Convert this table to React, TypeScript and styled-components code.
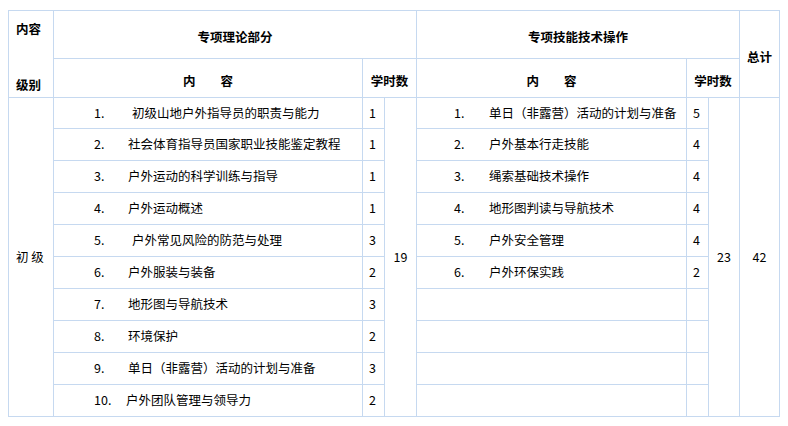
import styled, { createGlobalStyle } from "styled-components";

const GlobalStyle = createGlobalStyle`
  html, body {
    margin: 0;
    padding: 0;
    background: #ffffff;
  }

  body {
    font-family: "Noto Sans CJK SC", "Noto Sans", sans-serif;
    color: #000000;
  }
`;

const line = "#c6d9f0";

interface Item {
  no: string;
  text: string;
  hours: string;
  shift?: number;
}

const theory: Item[] = [
  { no: "1.", text: "初级山地户外指导员的职责与能力", hours: "1", shift: 4 },
  { no: "2.", text: "社会体育指导员国家职业技能鉴定教程", hours: "1" },
  { no: "3.", text: "户外运动的科学训练与指导", hours: "1" },
  { no: "4.", text: "户外运动概述", hours: "1" },
  { no: "5.", text: "户外常见风险的防范与处理", hours: "3", shift: 4 },
  { no: "6.", text: "户外服装与装备", hours: "2" },
  { no: "7.", text: "地形图与导航技术", hours: "3" },
  { no: "8.", text: "环境保护", hours: "2" },
  { no: "9.", text: "单日（非露营）活动的计划与准备", hours: "3" },
  { no: "10.", text: "户外团队管理与领导力", hours: "2", shift: -2 },
];

const skills: Item[] = [
  { no: "1.", text: "单日（非露营）活动的计划与准备", hours: "5" },
  { no: "2.", text: "户外基本行走技能", hours: "4" },
  { no: "3.", text: "绳索基础技术操作", hours: "4" },
  { no: "4.", text: "地形图判读与导航技术", hours: "4" },
  { no: "5.", text: "户外安全管理", hours: "4" },
  { no: "6.", text: "户外环保实践", hours: "2" },
];

const Page = styled.div`
  padding: 10px 0 0 8px;
`;

const Sheet = styled.table`
  border-collapse: collapse;
  table-layout: fixed;
  width: 771px;
  font-size: 12.5px;
  line-height: 18.7px;

  th,
  td {
    border: 1px solid ${line};
    padding: 0;
  }
`;

const Row = styled.tr<{ $height: number }>`
  height: ${(p) => p.$height}px;
`;

const HeadCell = styled.th`
  font-weight: bold;
  text-align: center;
  vertical-align: middle;
  padding-top: 6px !important;
  white-space: nowrap;
`;

const CornerCell = styled.th`
  font-weight: bold;
  text-align: left;
  vertical-align: top;
  padding: 9px 0 0 7px !important;
`;

const Corner = styled.div`
  display: flex;
  flex-direction: column;
  gap: 37.3px;
`;

const LevelCell = styled.td`
  text-align: left;
  vertical-align: middle;
  padding-left: 7px !important;
`;

const ItemCell = styled.td<{ $indent: number }>`
  padding-left: ${(p) => p.$indent}px !important;
  vertical-align: middle;
  white-space: nowrap;
  overflow: hidden;
`;

const Num = styled.span<{ $width: number }>`
  display: inline-block;
  width: ${(p) => p.$width}px;
`;

const HoursCell = styled.td`
  padding-left: 6px !important;
  vertical-align: middle;
`;

const SumCell = styled.td`
  text-align: center;
  vertical-align: middle;
`;

function ItemText({ item, width }: { item?: Item; width: number }) {
  if (!item) return null;
  return (
    <>
      <Num $width={width + (item.shift ?? 0)}>{item.no}</Num>
      {item.text}
    </>
  );
}

export default function App() {
  return (
    <>
      <GlobalStyle />
      <Page>
        <Sheet>
          <colgroup>
            <col style={{ width: 45 }} />
            <col style={{ width: 309 }} />
            <col style={{ width: 22 }} />
            <col style={{ width: 32 }} />
            <col style={{ width: 270 }} />
            <col style={{ width: 22 }} />
            <col style={{ width: 31 }} />
            <col style={{ width: 40 }} />
          </colgroup>
          <thead>
            <Row $height={48}>
              <CornerCell rowSpan={2}>
                <Corner>
                  <span>内容</span>
                  <span>级别</span>
                </Corner>
              </CornerCell>
              <HeadCell colSpan={3}>专项理论部分</HeadCell>
              <HeadCell colSpan={3}>专项技能技术操作</HeadCell>
              <HeadCell rowSpan={2}>总计</HeadCell>
            </Row>
            <Row $height={39}>
              <HeadCell>内　　容</HeadCell>
              <HeadCell colSpan={2}>学时数</HeadCell>
              <HeadCell>内　　容</HeadCell>
              <HeadCell colSpan={2}>学时数</HeadCell>
            </Row>
          </thead>
          <tbody>
            {theory.map((item, i) => (
              <Row key={item.no} $height={i === 0 ? 31 : 32}>
                {i === 0 && <LevelCell rowSpan={10}>初 级</LevelCell>}
                <ItemCell $indent={40}>
                  <ItemText item={item} width={34} />
                </ItemCell>
                <HoursCell>{item.hours}</HoursCell>
                {i === 0 && <SumCell rowSpan={10}>19</SumCell>}
                <ItemCell $indent={37}>
                  <ItemText item={skills[i]} width={35} />
                </ItemCell>
                <HoursCell>{skills[i]?.hours}</HoursCell>
                {i === 0 && <SumCell rowSpan={10}>23</SumCell>}
                {i === 0 && <SumCell rowSpan={10}>42</SumCell>}
              </Row>
            ))}
          </tbody>
        </Sheet>
      </Page>
    </>
  );
}
